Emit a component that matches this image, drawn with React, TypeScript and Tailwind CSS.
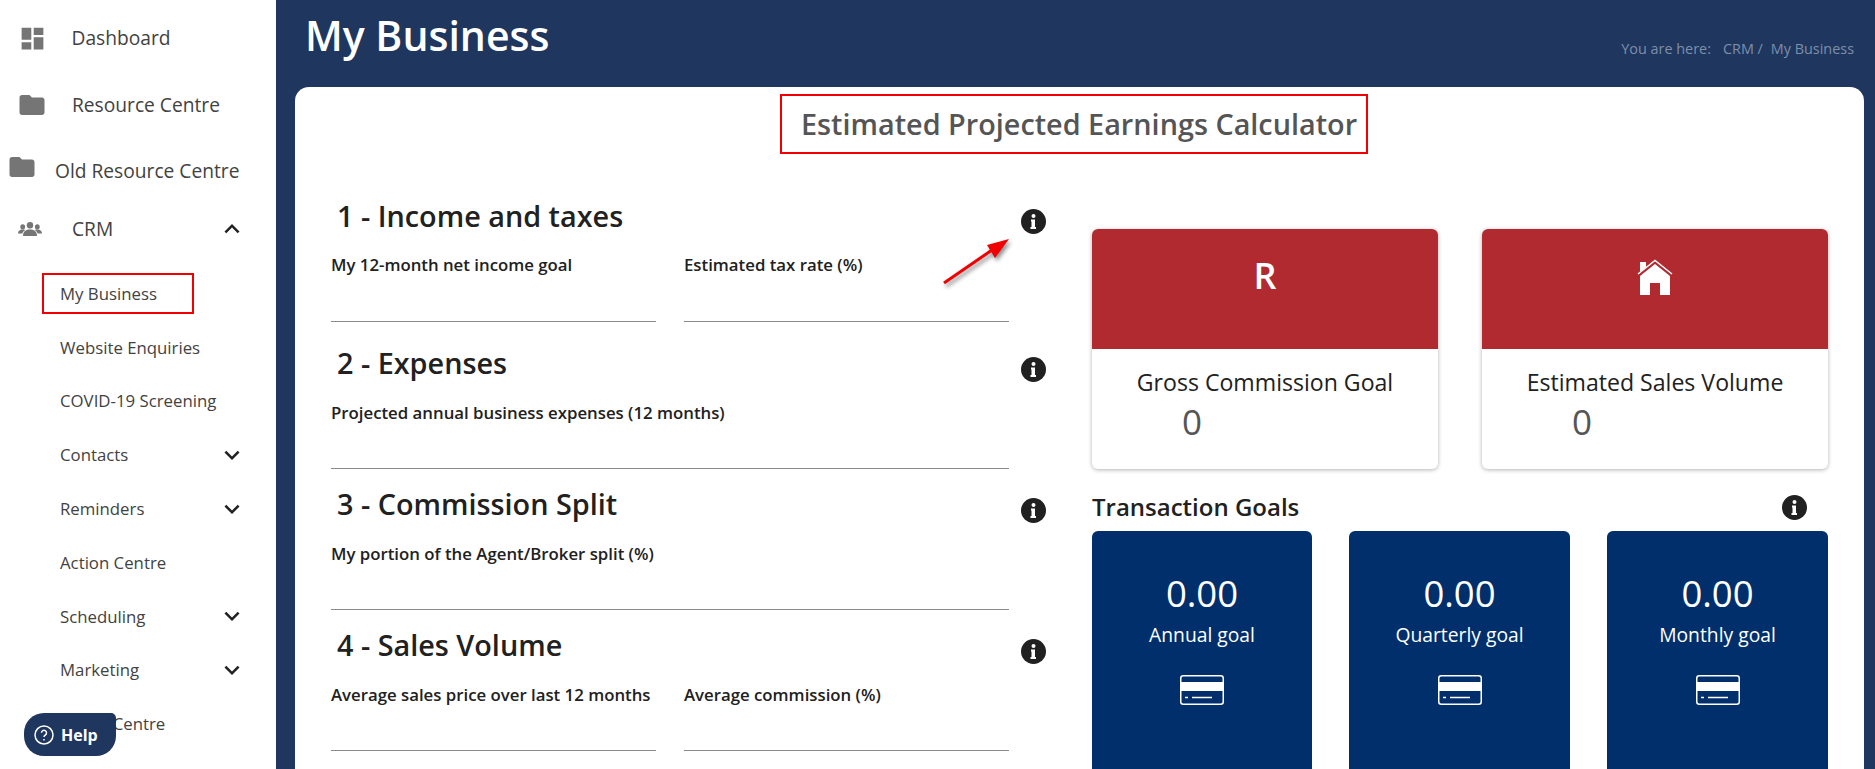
import { MdDashboard, MdFolder, MdExpandLess, MdExpandMore } from "react-icons/md";

const subItems = [
  { label: "My Business" },
  { label: "Website Enquiries" },
  { label: "COVID-19 Screening" },
  { label: "Contacts", more: true },
  { label: "Reminders", more: true },
  { label: "Action Centre" },
  { label: "Scheduling", more: true },
  { label: "Marketing", more: true },
  { label: "Media Centre" },
];

const goals = ["Annual goal", "Quarterly goal", "Monthly goal"];

function GroupIcon() {
  return (
    <svg viewBox="0 0 24 14" className="h-[14px] w-[24px] fill-[#757575]">
      <ellipse cx="12" cy="3.300" rx="3.200" ry="3.300" />
      <path d="M5 14c0-3.500 1.500-5.200 5-6.400h4c3.500 1.200 5 2.900 5 6.400z" />
      <ellipse cx="4.700" cy="4.800" rx="2.400" ry="2.600" />
      <path d="M0 11.500c0-2 1-3.200 3.200-4h3l1 .8C5.800 9 4.800 10 4.300 11.500z" />
      <ellipse cx="19.300" cy="4.800" rx="2.400" ry="2.600" />
      <path d="M24 11.500c0-2-1-3.200-3.200-4h-3l-1 .8c1.400.7 2.400 1.700 2.900 3.200z" />
    </svg>
  );
}

function HouseIcon() {
  return (
    <svg viewBox="0 0 36 36" className="h-9 w-9">
      <path d="M3 17 18 5l15 12v19H23V24H13v12H3z" fill="#fff" />
      <path d="M3 3h6v5l-6 5z" fill="#fff" />
      <path d="M1 15 18 1.500 35 15" fill="none" stroke="#fff" strokeWidth="1.500" />
    </svg>
  );
}

function CardIcon() {
  return (
    <svg viewBox="0 0 44 30" className="h-[30px] w-[44px]" fill="none" stroke="#fff">
      <rect x="0.750" y="0.750" width="42.500" height="28.500" rx="2.500" strokeWidth="1.500" />
      <rect x="1" y="7" width="42" height="9" fill="#fff" stroke="none" />
      <path d="M5 22.500h3M12 22.500h20" strokeWidth="1.500" />
    </svg>
  );
}

function Info({ className }: { className: string }) {
  return (
    <svg viewBox="0 0 25 25" className={`h-[25px] w-[25px] shrink-0 ${className}`}>
      <circle cx="12.500" cy="12.500" r="12.500" fill="#212121" />
      <circle cx="12.500" cy="7" r="2" fill="#fff" />
      <path d="M10 10.500h4v7.500h1v2h-5.500v-2h1v-5.500H10z" fill="#fff" />
    </svg>
  );
}

function Field({ label, fieldClass }: { label: string; fieldClass: string }) {
  return (
    <div className="min-w-0 flex-1">
      <div className="h-5 text-[16.800px] leading-5 font-semibold whitespace-nowrap text-[#212121]">{label}</div>
      <div className={`border-b border-[#8a8a8a] ${fieldClass}`} />
    </div>
  );
}

function Section({
  title,
  labels,
  className,
  fieldClass,
  headingClass,
}: {
  title: string;
  labels: string[];
  className: string;
  fieldClass: string;
  headingClass: string;
}) {
  return (
    <section className={className}>
      <div className="flex h-10 items-center justify-between">
        <h2 className={`ml-[6px] text-[28.800px] leading-10 font-semibold text-[#212121] ${headingClass}`}>{title}</h2>
        <Info className="mt-2 mr-[1px]" />
      </div>
      <div className="mt-[18px] flex w-[678px] gap-[28px]">
        {labels.map((label) => (
          <Field key={label} label={label} fieldClass={fieldClass} />
        ))}
      </div>
    </section>
  );
}

export default function App() {
  return (
    <div className="relative flex h-[769px] w-[1875px] overflow-hidden bg-[#1f365f] font-['Open_Sans',sans-serif]">
      {/* Sidebar */}
      <aside className="w-[276px] shrink-0 bg-white text-[#424242]">
        <div className="mt-[11px] flex h-[54px] items-center pl-[17.500px] text-[19.200px]">
          <MdDashboard className="text-[29px] text-[#757575]" />
          <span className="ml-[25px]">Dashboard</span>
        </div>
        <div className="mt-[13px] flex h-[54px] items-center pl-[17px] text-[19.200px]">
          <MdFolder className="text-[30px] text-[#757575]" />
          <span className="ml-[25px]">Resource Centre</span>
        </div>
        <div className="mt-[12px] flex h-[54px] items-center pl-[7px] text-[19.200px]">
          <MdFolder className="mb-[8px] text-[30px] text-[#757575]" />
          <span className="ml-[18px]">Old Resource Centre</span>
        </div>
        <div className="mt-[4px] flex h-[54px] items-center pr-[29px] pl-[18px] text-[19.200px]">
          <GroupIcon />
          <span className="ml-[30px] flex-1">CRM</span>
          <MdExpandLess className="text-[30px] text-[#212121]" />
        </div>
        <div className="mt-[10.500px]">
          {subItems.map((item) => (
            <div
              key={item.label}
              className="flex h-[53.800px] items-center pr-[29px] pl-[60px] text-[16.800px] text-[#424242]"
            >
              <span className="flex-1">{item.label}</span>
              {item.more && <MdExpandMore className="text-[30px] text-[#212121]" />}
            </div>
          ))}
        </div>
      </aside>

      {/* Main */}
      <main className="flex min-w-0 flex-1 flex-col">
        <header className="flex h-[87px] shrink-0 pr-[21px] pl-[29px]">
          <h1 className="mt-[10px] flex-1 text-[41px] leading-[50px] font-semibold text-white">My Business</h1>
          <div className="mt-[39px] text-[14.400px] leading-5 text-[#7d8fa9]">
            You are here:<span className="ml-[12px]">CRM /</span>
            <span className="ml-[8px]">My Business</span>
          </div>
        </header>

        <div className="mr-[11px] ml-[19px] min-h-0 flex-1 rounded-t-[14px] bg-white">
          <div className="mt-[7px] ml-[485px] flex h-[60px] w-[588px] items-center border-2 border-[#f00000] pl-[19px] text-[28.800px] font-semibold text-[#555555]">
            Estimated Projected Earnings Calculator
          </div>

          <div className="flex">
            {/* Left column */}
            <div className="ml-[36px] w-[716px] pt-[43px]">
              <Section title="1 - Income and taxes" labels={["My 12-month net income goal", "Estimated tax rate (%)"]} className="mb-[23px]" fieldClass="h-[47px]" headingClass="pb-[2px]" />
              <Section title="2 - Expenses" labels={["Projected annual business expenses (12 months)"]} className="mb-[17px]" fieldClass="h-[46px]" headingClass="pb-[4px]" />
              <Section title="3 - Commission Split" labels={["My portion of the Agent/Broker split (%)"]} className="mb-[17px]" fieldClass="h-[46px]" headingClass="pb-[4px]" />
              <Section title="4 - Sales Volume" labels={["Average sales price over last 12 months", "Average commission (%)"]} className="" fieldClass="h-[46px]" headingClass="pb-[4px]" />
            </div>

            {/* Right column */}
            <div className="ml-[45px] w-[736px] pt-[75px]">
              <div className="grid grid-cols-2 gap-[44px]">
                <div className="h-[240px] rounded-md bg-white shadow-[0_1px_4px_rgba(0,0,0,0.3)]">
                  <div className="flex h-[120px] justify-center rounded-t-md bg-[#b02a30] pt-[22px] text-[36px] leading-[50px] font-semibold text-white">
                    R
                  </div>
                  <div className="pt-[18px] text-center text-[23.100px] leading-[30px] text-[#212121]">Gross Commission Goal</div>
                  <div className="mt-[3px] pl-[90px] text-[35px] leading-[44px] text-[#555555]">0</div>
                </div>
                <div className="h-[240px] rounded-md bg-white shadow-[0_1px_4px_rgba(0,0,0,0.3)]">
                  <div className="flex h-[120px] justify-center rounded-t-md bg-[#b02a30] pt-[30px]">
                    <HouseIcon />
                  </div>
                  <div className="pt-[18px] text-center text-[23.100px] leading-[30px] text-[#212121]">Estimated Sales Volume</div>
                  <div className="mt-[3px] pl-[90px] text-[35px] leading-[44px] text-[#555555]">0</div>
                </div>
              </div>

              <div className="mt-[20px] flex h-9 items-center justify-between pr-[21px]">
                <h3 className="text-[24px] leading-9 font-semibold text-[#212121]">Transaction Goals</h3>
                <Info className="" />
              </div>

              <div className="mt-[6px] grid grid-cols-[220px_221px_221px] gap-[37px]">
                {goals.map((goal) => (
                  <div key={goal} className="flex h-[260px] flex-col items-center rounded-md bg-[#002f6c] pt-[37px] text-white">
                    <div className="text-[36.500px] leading-[50px]">0.00</div>
                    <div className="text-[19.300px] leading-[34px]">{goal}</div>
                    <div className="mt-[23px]">
                      <CardIcon />
                    </div>
                  </div>
                ))}
              </div>
            </div>
          </div>
        </div>
      </main>

      {/* Annotations on top of the screenshot */}
      <div className="absolute top-[273px] left-[42px] h-[41px] w-[152px] border-2 border-[#f00000]" />
      <svg className="absolute top-[235px] left-[940px] drop-shadow-[2px_3px_2px_rgba(0,0,0,0.45)]" width="76" height="54" viewBox="0 0 76 54">
        <path d="M4 48 52 15" stroke="#f00000" strokeWidth="3" />
        <path d="M69 4 47 10 55 23Z" fill="#f00000" />
      </svg>
      <div className="absolute top-[713px] left-[24px] flex h-[43px] w-[92px] items-center rounded-tl-[20px] rounded-tr-[5px] rounded-br-[20px] rounded-bl-[20px] bg-[#1f365f] pl-[10px] text-white">
        <svg viewBox="0 0 20 20" className="h-5 w-5" fill="none" stroke="#fff" strokeWidth="1.500">
          <circle cx="10" cy="10" r="9" />
          <path d="M7.500 7.800a2.500 2.500 0 1 1 3.800 2.200c-.9.5-1.300 1-1.300 2" />
          <path d="M10 14v1.500" />
        </svg>
        <span className="ml-[7px] text-base font-bold">Help</span>
      </div>
    </div>
  );
}
